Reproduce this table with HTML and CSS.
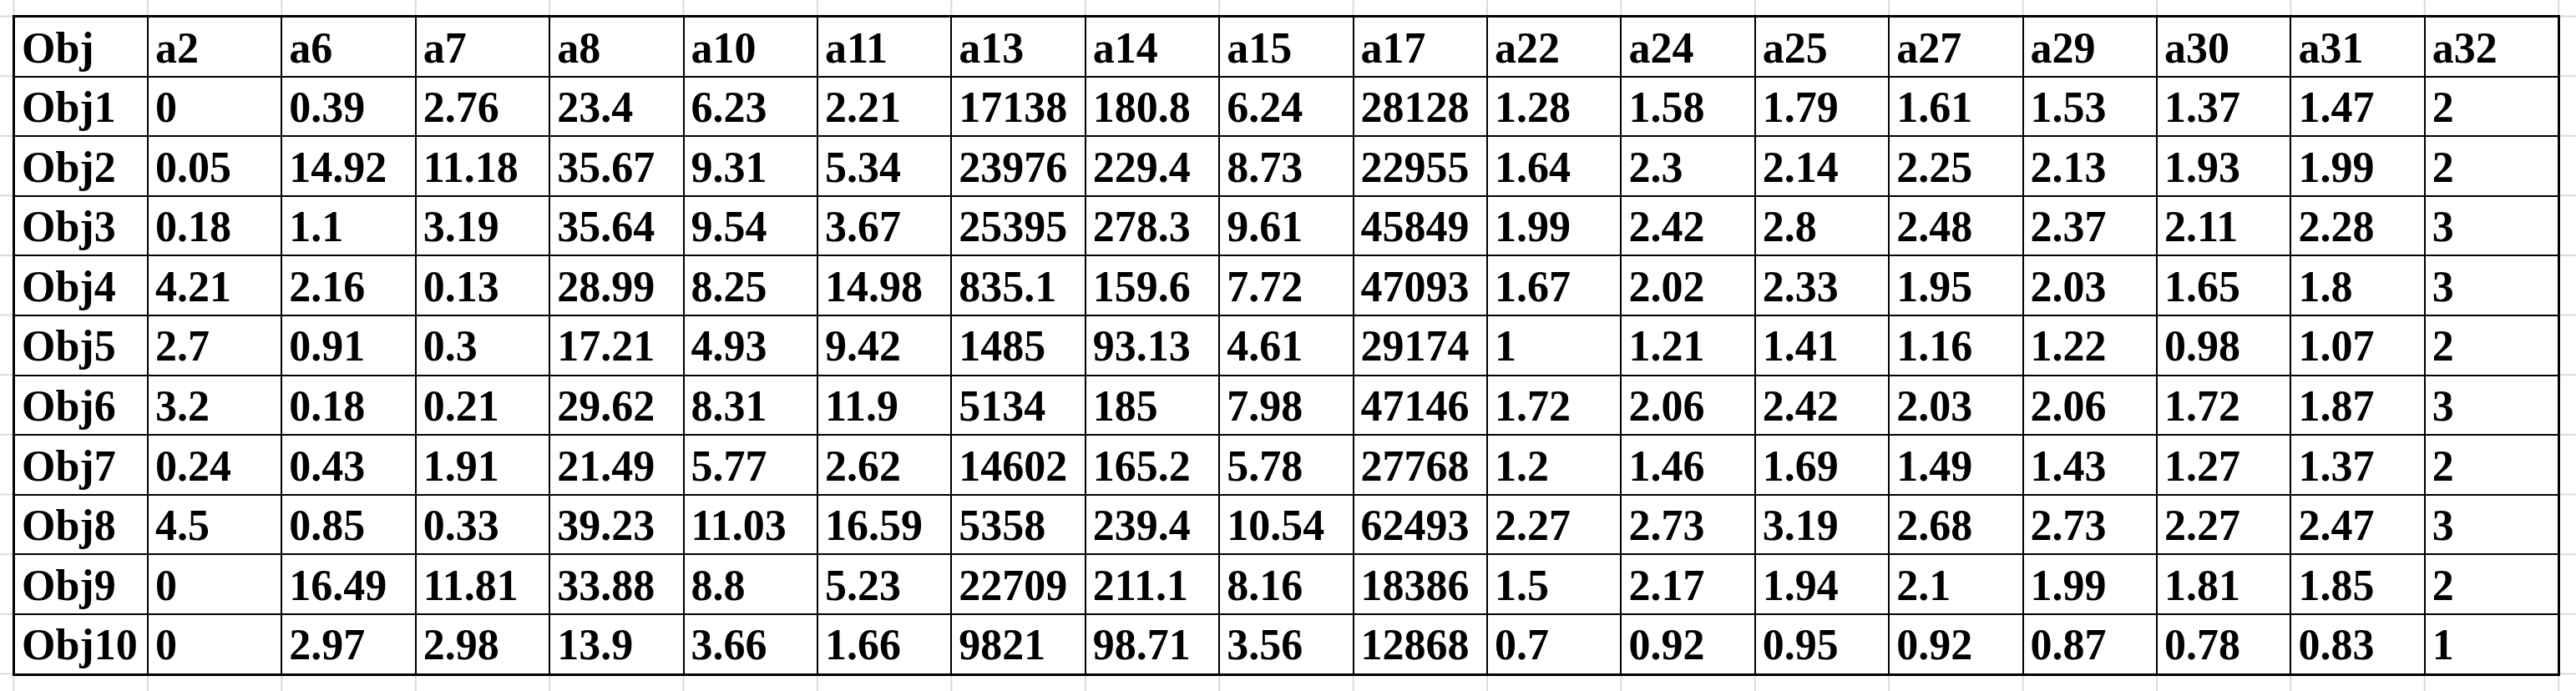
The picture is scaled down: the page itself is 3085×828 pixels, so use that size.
FILE: index.html
```html
<!DOCTYPE html>
<html lang="en">
<head>
<meta charset="utf-8">
<title>Obj table</title>
<link rel="stylesheet" href="styles.css">
</head>
<body>
<table class="sheet">
<thead>
<tr><th>Obj</th><th>a2</th><th>a6</th><th>a7</th><th>a8</th><th>a10</th><th>a11</th><th>a13</th><th>a14</th><th>a15</th><th>a17</th><th>a22</th><th>a24</th><th>a25</th><th>a27</th><th>a29</th><th>a30</th><th>a31</th><th>a32</th></tr>
</thead>
<tbody>
<tr><td>Obj1</td><td>0</td><td>0.39</td><td>2.76</td><td>23.4</td><td>6.23</td><td>2.21</td><td>17138</td><td>180.8</td><td>6.24</td><td>28128</td><td>1.28</td><td>1.58</td><td>1.79</td><td>1.61</td><td>1.53</td><td>1.37</td><td>1.47</td><td>2</td></tr>
<tr><td>Obj2</td><td>0.05</td><td>14.92</td><td>11.18</td><td>35.67</td><td>9.31</td><td>5.34</td><td>23976</td><td>229.4</td><td>8.73</td><td>22955</td><td>1.64</td><td>2.3</td><td>2.14</td><td>2.25</td><td>2.13</td><td>1.93</td><td>1.99</td><td>2</td></tr>
<tr><td>Obj3</td><td>0.18</td><td>1.1</td><td>3.19</td><td>35.64</td><td>9.54</td><td>3.67</td><td>25395</td><td>278.3</td><td>9.61</td><td>45849</td><td>1.99</td><td>2.42</td><td>2.8</td><td>2.48</td><td>2.37</td><td>2.11</td><td>2.28</td><td>3</td></tr>
<tr><td>Obj4</td><td>4.21</td><td>2.16</td><td>0.13</td><td>28.99</td><td>8.25</td><td>14.98</td><td>835.1</td><td>159.6</td><td>7.72</td><td>47093</td><td>1.67</td><td>2.02</td><td>2.33</td><td>1.95</td><td>2.03</td><td>1.65</td><td>1.8</td><td>3</td></tr>
<tr><td>Obj5</td><td>2.7</td><td>0.91</td><td>0.3</td><td>17.21</td><td>4.93</td><td>9.42</td><td>1485</td><td>93.13</td><td>4.61</td><td>29174</td><td>1</td><td>1.21</td><td>1.41</td><td>1.16</td><td>1.22</td><td>0.98</td><td>1.07</td><td>2</td></tr>
<tr><td>Obj6</td><td>3.2</td><td>0.18</td><td>0.21</td><td>29.62</td><td>8.31</td><td>11.9</td><td>5134</td><td>185</td><td>7.98</td><td>47146</td><td>1.72</td><td>2.06</td><td>2.42</td><td>2.03</td><td>2.06</td><td>1.72</td><td>1.87</td><td>3</td></tr>
<tr><td>Obj7</td><td>0.24</td><td>0.43</td><td>1.91</td><td>21.49</td><td>5.77</td><td>2.62</td><td>14602</td><td>165.2</td><td>5.78</td><td>27768</td><td>1.2</td><td>1.46</td><td>1.69</td><td>1.49</td><td>1.43</td><td>1.27</td><td>1.37</td><td>2</td></tr>
<tr><td>Obj8</td><td>4.5</td><td>0.85</td><td>0.33</td><td>39.23</td><td>11.03</td><td>16.59</td><td>5358</td><td>239.4</td><td>10.54</td><td>62493</td><td>2.27</td><td>2.73</td><td>3.19</td><td>2.68</td><td>2.73</td><td>2.27</td><td>2.47</td><td>3</td></tr>
<tr><td>Obj9</td><td>0</td><td>16.49</td><td>11.81</td><td>33.88</td><td>8.8</td><td>5.23</td><td>22709</td><td>211.1</td><td>8.16</td><td>18386</td><td>1.5</td><td>2.17</td><td>1.94</td><td>2.1</td><td>1.99</td><td>1.81</td><td>1.85</td><td>2</td></tr>
<tr><td>Obj10</td><td>0</td><td>2.97</td><td>2.98</td><td>13.9</td><td>3.66</td><td>1.66</td><td>9821</td><td>98.71</td><td>3.56</td><td>12868</td><td>0.7</td><td>0.92</td><td>0.95</td><td>0.92</td><td>0.87</td><td>0.78</td><td>0.83</td><td>1</td></tr>
</tbody>
</table>
</body>
</html>
```

FILE: styles.css
```css
html {
  background-color: #ffffff;
  background-image:
    linear-gradient(to right, #dadada 0, #dadada 2px, transparent 2px),
    linear-gradient(to bottom, #dadada 0, #dadada 2px, transparent 2px);
  background-size: 160.42px 100%, 100% 71.64px;
  background-position: 15.5px 0, 0 18.5px;
  min-height: 100%;
}

body {
  margin: 0;
  padding: 18px 0 0 15px;
  font-family: "Liberation Serif", "Times New Roman", serif;
}

.sheet {
  border-collapse: collapse;
  table-layout: fixed;
  width: 3051px;
  background: #ffffff;
  border: 3px solid #000000;
}

.sheet th,
.sheet td {
  border: 2px solid #000000;
  padding: 10.5px 4px 7.1px 8px;
  font-size: 52px;
  line-height: 52px;
  font-weight: bold;
  text-align: left;
  vertical-align: top;
  white-space: nowrap;
  color: #000000;
  overflow: visible;
}
```
